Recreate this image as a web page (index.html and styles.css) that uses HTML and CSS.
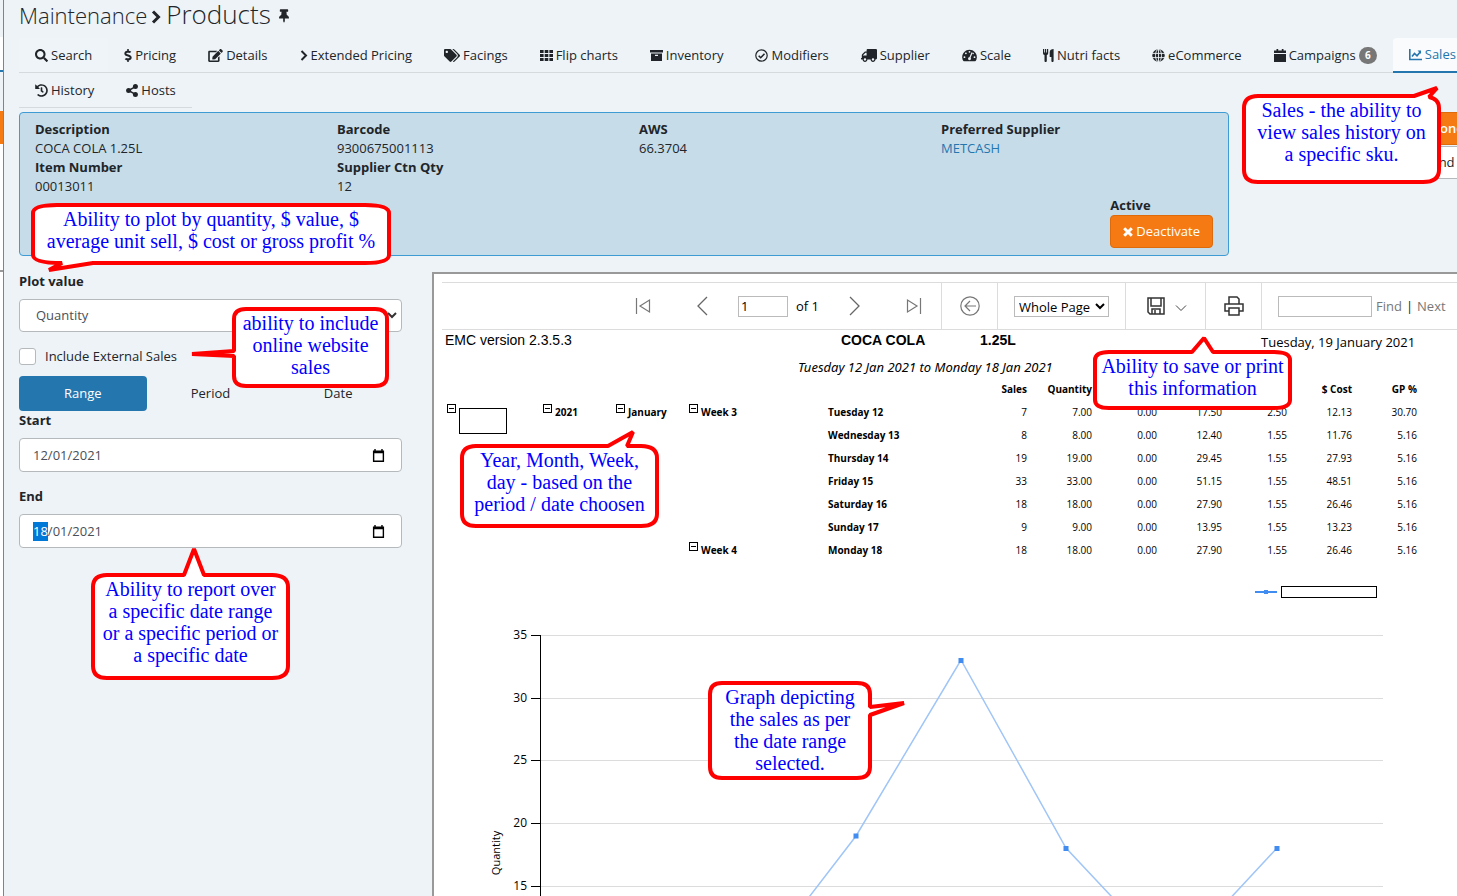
FILE: index.html
```html
<!DOCTYPE html>
<html lang="en">
<head>
<meta charset="utf-8">
<title>Maintenance - Products</title>
<link rel="stylesheet" href="styles.css">
</head>
<body>
<div class="app">
  <div class="rail" aria-hidden="true">
    <span class="rail-top"></span>
    <span class="rail-tab"></span>
    <span class="rail-space"></span>
    <span class="rail-action"></span>
    <span class="rail-body"></span>
    <span class="rail-frame"></span>
  </div>
  <main class="panel">
    <h1 class="title">Maintenance
      <svg class="title-chevron" viewBox="0 0 10 14"><path d="M2 1.500l5.500 5.500L2 12.500" fill="none" stroke="currentColor" stroke-width="3"/></svg>
      <span class="title-page">Products</span>
      <svg class="title-pin" viewBox="0 0 384 512"><path d="M298 214L286 96H328c13 0 24-11 24-24V24c0-13-11-24-24-24H56C43 0 32 11 32 24v48c0 13 11 24 24 24h42L86 214C37 237 0 277 0 328c0 13 11 24 24 24h136v104l1 4 24 48c3 6 11 6 14 0l24-48 1-4V352h136c13 0 24-11 24-24 0-51-38-91-86-114z"/></svg>
    </h1>

    <nav class="tabs">
      <ul class="tab-row">
        <li><a class="tab tab-first" href="#"><svg class="i13" viewBox="0 0 512 512"><path d="M505 442.700L405.300 343c-4.500-4.500-10.600-7-17-7H372c27.600-35.300 44-79.700 44-128C416 93.100 322.900 0 208 0S0 93.100 0 208s93.100 208 208 208c48.300 0 92.700-16.400 128-44v16.300c0 6.400 2.500 12.500 7 17l99.700 99.700c9.400 9.400 24.600 9.400 33.900 0l28.300-28.300c9.400-9.400 9.400-24.600.1-34zM208 336c-70.700 0-128-57.200-128-128 0-70.700 57.200-128 128-128 70.700 0 128 57.200 128 128 0 70.700-57.200 128-128 128z"/></svg>Search</a></li>
        <li><a class="tab" href="#"><svg class="i8" viewBox="0 0 288 512"><path d="M209.200 233.400l-108-31.600C88.700 198.200 80 186.500 80 173.500c0-16.300 13.200-29.500 29.500-29.500h66.300c12.200 0 24.200 3.700 34.200 10.500 6.100 4.100 14.300 3.100 19.500-2l34.800-34c7.100-6.900 6.100-18.400-1.800-24.500C238 74.800 207.400 64.100 176 64V16c0-8.800-7.200-16-16-16h-32c-8.800 0-16 7.200-16 16v48h-2.500C45.800 64-5.400 118.700.5 183.600c4.200 46.100 39.400 83.600 83.800 96.600l102.500 30c12.500 3.700 21.200 15.300 21.200 28.300 0 16.300-13.200 29.500-29.500 29.500h-66.300C100 368 88 364.300 78 357.500c-6.100-4.100-14.300-3.100-19.500 2l-34.800 34c-7.100 6.900-6.100 18.400 1.800 24.500 24.500 19.200 55.100 29.900 86.500 30v48c0 8.800 7.200 16 16 16h32c8.800 0 16-7.200 16-16v-48.200c46.600-.9 90.300-28.600 105.700-72.700 21.500-61.600-14.600-124.800-72.500-141.700z"/></svg>Pricing</a></li>
        <li><a class="tab" href="#"><svg class="i15" viewBox="0 0 576 512"><path d="M402.600 83.200l90.200 90.200c3.800 3.800 3.800 10 0 13.800L274.400 405.600l-92.800 10.300c-12.400 1.400-22.900-9.100-21.500-21.500l10.300-92.800L388.800 83.200c3.800-3.800 10-3.800 13.800 0zm162-22.900l-48.800-48.800c-15.200-15.200-39.900-15.200-55.200 0l-35.400 35.400c-3.800 3.800-3.800 10 0 13.800l90.200 90.200c3.800 3.800 10 3.800 13.800 0l35.400-35.400c15.200-15.300 15.200-40 0-55.200zM384 346.200V448H64V128h229.800c3.200 0 6.200-1.300 8.500-3.500l40-40c7.600-7.600 2.200-20.500-8.500-20.500H48C21.500 64 0 85.500 0 112v352c0 26.500 21.500 48 48 48h352c26.500 0 48-21.500 48-48V306.200c0-10.700-12.900-16-20.500-8.500l-40 40c-2.200 2.300-3.500 5.300-3.500 8.500z"/></svg>Details</a></li>
        <li><a class="tab" href="#"><svg class="i8" viewBox="0 0 8 13"><path d="M1.500 2l4.500 4.500L1.500 11" fill="none" stroke="currentColor" stroke-width="2"/></svg>Extended Pricing</a></li>
        <li><a class="tab" href="#"><svg class="i16" viewBox="0 0 640 512"><path d="M497.900 225.900L286 14A48 48 0 0 0 252 0H48C21.500 0 0 21.500 0 48v204a48 48 0 0 0 14 34l212 212c18.700 18.700 49 18.700 67.900 0l204-204c18.800-18.900 18.800-49.300 0-68.100zM112 160c-26.500 0-48-21.500-48-48s21.500-48 48-48 48 21.500 48 48-21.500 48-48 48zm514 133.800L421.800 498c-18.700 18.700-49 18.700-67.900 0l-.4-.4L527.600 323.500c17-17 26.400-39.600 26.400-63.600s-9.400-46.700-26.400-63.700L331.400 0H380a48 48 0 0 1 34 14l212 212c18.700 18.700 18.700 49 0 67.800z"/></svg>Facings</a></li>
        <li><a class="tab" href="#"><svg class="i13" viewBox="0 0 13 13"><path d="M0 1h3.600v3H0zM4.700 1h3.600v3H4.700zM9.400 1H13v3H9.400zM0 5h3.600v3H0zM4.700 5h3.600v3H4.700zM9.400 5H13v3H9.400zM0 9h3.600v3H0zM4.700 9h3.600v3H4.700zM9.400 9H13v3H9.400z"/></svg>Flip charts</a></li>
        <li><a class="tab" href="#"><svg class="i13" viewBox="0 0 13 13"><path fill-rule="evenodd" d="M0 1h13v2.600H0zM1 4.500h11V12H1zM5 5.800v1.200h3V5.800z"/></svg>Inventory</a></li>
        <li><a class="tab" href="#"><svg class="i13" viewBox="0 0 13 13"><g fill="none" stroke="currentColor"><circle cx="6.500" cy="6.500" r="5.700" stroke-width="1.200"/><path d="M3.700 6.700l2 2 3.800-3.900" stroke-width="1.600"/></g></svg>Modifiers</a></li>
        <li><a class="tab" href="#"><svg class="i16" viewBox="0 0 640 512"><path transform="matrix(-1 0 0 1 640 0)" d="M624 352h-16V243.900c0-12.700-5.100-24.900-14.100-33.900L494 110.100c-9-9-21.200-14.100-33.900-14.100H416V48c0-26.500-21.500-48-48-48H48C21.500 0 0 21.500 0 48v320c0 26.500 21.500 48 48 48h16c0 53 43 96 96 96s96-43 96-96h128c0 53 43 96 96 96s96-43 96-96h48c8.800 0 16-7.200 16-16v-32c0-8.800-7.200-16-16-16zM160 464c-26.500 0-48-21.500-48-48s21.500-48 48-48 48 21.500 48 48-21.500 48-48 48zm320 0c-26.500 0-48-21.500-48-48s21.500-48 48-48 48 21.500 48 48-21.500 48-48 48zm80-208H416V144h44.100l99.900 99.900V256z"/></svg>Supplier</a></li>
        <li><a class="tab" href="#"><svg class="i15" viewBox="0 0 576 512"><path d="M288 32C129 32 0 161 0 320c0 53 14 102 39 145 6 9 16 15 28 15h442c12 0 22-6 28-15 25-43 39-92 39-145C576 161 447 32 288 32z"/><g fill="#edf3f7"><circle cx="288" cy="112" r="36"/><circle cx="145" cy="170" r="36"/><circle cx="90" cy="320" r="36"/><circle cx="486" cy="320" r="36"/><circle cx="430" cy="180" r="30"/></g><path d="M390 140L290 370" stroke="#edf3f7" stroke-width="46"/><circle cx="288" cy="385" r="58" fill="#edf3f7"/></svg>Scale</a></li>
        <li><a class="tab" href="#"><svg class="i11" viewBox="0 0 11 13"><path d="M0 0h1.200v3.500h.8V0h1.200v3.500H4V0h1.200v4c0 1.200-.6 1.800-1.400 2.100V12c0 1.300-2.300 1.300-2.300 0V6.100C.6 5.800 0 5.200 0 4zM10.600 0v12c0 1.300-2.200 1.300-2.200 0V8H6.700V3.200C6.700 1.200 8.500 0 10.600 0z"/></svg>Nutri facts</a></li>
        <li><a class="tab" href="#"><svg class="i13" viewBox="0 0 13 13"><circle cx="6.500" cy="6.500" r="6.200"/><g fill="none" stroke="#edf3f7" stroke-width=".9"><ellipse cx="6.500" cy="6.500" rx="3" ry="6.200"/><path d="M0 4.400h13M0 8.600h13M6.500 0v13"/></g></svg>eCommerce</a></li>
        <li><a class="tab" href="#"><svg class="i12" viewBox="0 0 12 13"><path d="M2.500 0h1.700v1.500h3.600V0h1.700v1.500H12V4H0V1.500h2.500zM0 5h12v8H0z"/></svg>Campaigns<span class="badge">6</span></a></li>
        <li><a class="tab tab-active" href="#"><svg class="i13" viewBox="0 0 13 13"><path d="M.8 1v10.500H13M3 8.500l2.500-3 2.500 2.300 3-3.600" fill="none" stroke="currentColor" stroke-width="1.600"/><path d="M8.500 2.500H12V6z"/></svg>Sales</a></li>
      </ul>
      <ul class="tab-row tab-row-short">
        <li><a class="tab" href="#"><svg class="i13" viewBox="0 0 512 512"><path d="M504 255.500c.3 136.600-111.200 248.400-247.800 248.500-59 0-113.200-20.500-155.800-54.900-11.100-9-11.900-25.600-1.900-35.600l11.300-11.300c8.600-8.600 22.400-9.600 31.900-2C173 425 212.800 440 256 440c101.700 0 184-82.300 184-184 0-101.700-82.300-184-184-184-48.800 0-93.100 19-126 50l50.700 50.700c10 10 2.900 27.300-11.400 27.300H24c-8.800 0-16-7.200-16-16V38.600c0-14.200 17.200-21.400 27.300-11.300l49.400 49.400C129.200 34 189.600 8 256 8c136.800 0 247.700 110.800 248 247.500zM323 334.300l9.900-12.600c8-10.500 6.200-25.600-4.200-33.700L288 256.300V152c0-13.300-10.700-24-24-24h-16c-13.300 0-24 10.700-24 24v135.700l65.400 50.800c10.500 8.200 25.600 6.300 33.600-4.200z"/></svg>History</a></li>
        <li><a class="tab" href="#"><svg class="i12" viewBox="0 0 12 13"><circle cx="2.600" cy="6.500" r="2.500"/><circle cx="9.400" cy="2.600" r="2.500"/><circle cx="9.400" cy="10.400" r="2.500"/><path d="M9.400 2.600L2.600 6.500l6.800 3.900" fill="none" stroke="currentColor" stroke-width="1.500"/></svg>Hosts</a></li>
      </ul>
    </nav>

    <div class="summary-row">
      <section class="summary">
        <dl class="facts">
          <div><dt>Description</dt><dd>COCA COLA 1.25L</dd><dt>Item Number</dt><dd>00013011</dd></div>
          <div><dt>Barcode</dt><dd>9300675001113</dd><dt>Supplier Ctn Qty</dt><dd>12</dd></div>
          <div><dt>AWS</dt><dd>66.3704</dd></div>
          <div><dt>Preferred Supplier</dt><dd><a class="link" href="#">METCASH</a></dd></div>
        </dl>
        <div class="status">
          <div class="status-box">
            <strong>Active</strong>
            <button class="btn-orange" type="button"><svg class="i10" viewBox="0 0 10 10"><path d="M1.200 1.200l7.600 7.600M8.800 1.200l-7.600 7.600" stroke="currentColor" stroke-width="3"/></svg>Deactivate</button>
          </div>
        </div>
      </section>
      <div class="actions">
        <button class="action action-main" type="button">Clone</button>
        <button class="action" type="button">Expand</button>
      </div>
    </div>

    <div class="work">
      <form class="filters">
        <label class="label" for="plot">Plot value</label>
        <div class="select-wrap">
          <select class="field select" id="plot"><option>Quantity</option></select>
          <svg class="select-arrow" viewBox="0 0 10 7"><path d="M1 1l4 4 4-4" fill="none" stroke="#333" stroke-width="2"/></svg>
        </div>
        <label class="check"><input class="check-box" type="checkbox">Include External Sales</label>
        <div class="modes">
          <button class="mode mode-on" type="button">Range</button>
          <button class="mode" type="button">Period</button>
          <button class="mode" type="button">Date</button>
        </div>
        <label class="label" for="start">Start</label>
        <div class="date">
          <input class="date-input" id="start" type="text" value="12/01/2021">
          <button class="date-btn" type="button" aria-label="Pick start date"><svg class="i13" viewBox="0 0 13 14"><path fill-rule="evenodd" d="M.5 1.500h1.500V0h1.500v1.500h6V0H11v1.500h1.500V14H.500zM2 4.500v8h9v-8z" fill="#000"/></svg></button>
        </div>
        <label class="label" for="end">End</label>
        <div class="date">
          <input class="date-input" id="end" type="text" value="18/01/2021">
          <button class="date-btn" type="button" aria-label="Pick end date"><svg class="i13" viewBox="0 0 13 14"><path fill-rule="evenodd" d="M.5 1.500h1.500V0h1.500v1.500h6V0H11v1.500h1.500V14H.500zM2 4.500v8h9v-8z" fill="#000"/></svg></button>
        </div>
      </form>

      <section class="report">
        <div class="toolbar">
          <div class="tool-group tool-pages">
            <button class="tool" type="button" aria-label="First page"><svg class="i16t" viewBox="0 0 16 16"><path d="M1.500 0v16M14.500 2v12L5 8z" fill="none" stroke="#777" stroke-width="1.200"/></svg></button>
            <button class="tool" type="button" aria-label="Previous page"><svg class="i12t" viewBox="0 0 12 20"><path d="M11 1L2 10l9 9" fill="none" stroke="#666" stroke-width="1.300"/></svg></button>
            <div class="page-of"><input class="box page-input" type="text" value="1" aria-label="Page"><span>of 1</span></div>
            <button class="tool" type="button" aria-label="Next page"><svg class="i12t" viewBox="0 0 12 20"><path d="M1 1l9 9-9 9" fill="none" stroke="#666" stroke-width="1.300"/></svg></button>
            <button class="tool" type="button" aria-label="Last page"><svg class="i16t" viewBox="0 0 16 16"><path d="M14.500 0v16M1.500 2v12L11 8z" fill="none" stroke="#777" stroke-width="1.200"/></svg></button>
          </div>
          <div class="tool-group tool-icon"><button class="tool" type="button" aria-label="Back"><svg class="i20" viewBox="0 0 20 20"><g fill="none" stroke="#777" stroke-width="1.200"><circle cx="10" cy="10" r="9.200"/><path d="M16 10H5M10 5l-5 5 5 5"/></g></svg></button></div>
          <div class="tool-group"><select class="box zoom" aria-label="Zoom"><option>Whole Page</option></select></div>
          <div class="tool-group tool-save">
            <button class="tool" type="button" aria-label="Save"><svg class="i18" viewBox="0 0 18 18"><g fill="none" stroke="#333" stroke-width="1.500"><path d="M1 1h16v16H3l-2-2zM4 1v8h10V1M5 17v-5h8v5M8 13v4"/></g></svg></button>
            <button class="tool tool-drop" type="button" aria-label="Save options"><svg class="i12" viewBox="0 0 12 8"><path d="M1 1l5 5 5-5" fill="none" stroke="#444"/></svg></button>
          </div>
          <div class="tool-group tool-icon"><button class="tool" type="button" aria-label="Print"><svg class="i20" viewBox="0 0 20 20"><g fill="#fff" stroke="#333" stroke-width="1.500"><path d="M5 8V1h8l2 2v5M5 15H1V8h18v7h-4"/><path d="M5 12h10v7H5z"/></g></svg></button></div>
          <div class="tool-group tool-find"><input class="box find" type="text" aria-label="Find text"><a href="#">Find</a><span class="bar">|</span><a href="#">Next</a></div>
        </div>

        <header class="report-head">
          <span>EMC version 2.3.5.3</span><b>COCA COLA</b><b>1.25L</b><span class="report-date">Tuesday, 19 January 2021</span>
        </header>
        <p class="report-range">Tuesday 12 Jan 2021 to Monday 18 Jan 2021</p>

        <table class="sales">
          <colgroup><col class="c-store"><col class="c-year"><col class="c-year"><col class="c-week"><col class="c-day"><col class="c-num"><col class="c-num"><col class="c-num"><col class="c-num"><col class="c-num"><col class="c-num"></colgroup>
          <thead><tr><th colspan="4"></th><th class="num">Sales</th><th class="num">Quantity</th><th></th><th></th><th></th><th class="num">$ Cost</th><th class="num">GP %</th></tr></thead>
          <tbody>
            <tr>
              <th class="group" rowspan="7"><div class="node"><button class="toggle" type="button" aria-label="Collapse store"></button><span class="blank"></span></div></th>
              <th class="group" rowspan="7"><div class="node"><button class="toggle" type="button" aria-label="Collapse year"></button>2021</div></th>
              <th class="group" rowspan="7"><div class="node"><button class="toggle" type="button" aria-label="Collapse month"></button>January</div></th>
              <th class="group" rowspan="6"><div class="node"><button class="toggle" type="button" aria-label="Collapse week 3"></button>Week 3</div></th>
              <td class="day"><span>Tuesday 12</span><span>7</span></td><td>7.00</td><td>0.00</td><td>17.50</td><td>2.50</td><td>12.13</td><td>30.70</td>
            </tr>
            <tr><td class="day"><span>Wednesday 13</span><span>8</span></td><td>8.00</td><td>0.00</td><td>12.40</td><td>1.55</td><td>11.76</td><td>5.16</td></tr>
            <tr><td class="day"><span>Thursday 14</span><span>19</span></td><td>19.00</td><td>0.00</td><td>29.45</td><td>1.55</td><td>27.93</td><td>5.16</td></tr>
            <tr><td class="day"><span>Friday 15</span><span>33</span></td><td>33.00</td><td>0.00</td><td>51.15</td><td>1.55</td><td>48.51</td><td>5.16</td></tr>
            <tr><td class="day"><span>Saturday 16</span><span>18</span></td><td>18.00</td><td>0.00</td><td>27.90</td><td>1.55</td><td>26.46</td><td>5.16</td></tr>
            <tr><td class="day"><span>Sunday 17</span><span>9</span></td><td>9.00</td><td>0.00</td><td>13.95</td><td>1.55</td><td>13.23</td><td>5.16</td></tr>
            <tr>
              <th class="group"><div class="node"><button class="toggle" type="button" aria-label="Collapse week 4"></button>Week 4</div></th>
              <td class="day"><span>Monday 18</span><span>18</span></td><td>18.00</td><td>0.00</td><td>27.90</td><td>1.55</td><td>26.46</td><td>5.16</td>
            </tr>
          </tbody>
        </table>

        <div class="legend"><svg class="legend-mark" viewBox="0 0 22 6"><path d="M0 3h22" stroke="#418cf0" stroke-width="2"/><path d="M9 1h4v4H9z" fill="#418cf0"/></svg><span class="legend-name"></span></div>

        <svg class="chart" viewBox="0 0 1015 500" width="1015" height="500" role="img" aria-label="Quantity by day">
          <path d="M99 35.500h842M99 98.500h842M99 160.500h842M99 223.500h842M99 286.500h842" stroke="#dcdcdc"/>
          <path d="M98.500 35v440M89 35.500h10M89 98.500h10M89 160.500h10M89 223.500h10M89 286.500h10" stroke="#000"/>
          <g class="chart-text" text-anchor="end"><text x="85" y="39">35</text><text x="85" y="102">30</text><text x="85" y="164">25</text><text x="85" y="227">20</text><text x="85" y="290">15</text></g>
          <text class="chart-title" text-anchor="middle" transform="translate(58 253) rotate(-90)">Quantity</text>
          <path d="M203 386L308 374 414 236 519 60 624 248 730 361 835 248" fill="none" stroke="#a0c5f7" stroke-width="1.500"/>
          <path d="M411.500 233.500h5v5h-5zM516.500 58h5v5h-5zM621.500 246h5v5h-5zM832.500 246h5v5h-5z" fill="#418cf0"/>
        </svg>
      </section>
    </div>
  </main>

  <aside class="callout note-sales"><svg class="bubble"><path d="M16 2H172L195 -6 187 3Q197 5 197 14V76Q197 88 181 88H16Q2 88 2 76V14Q2 2 16 2z"/></svg><p>Sales - the ability to<br>view sales history on<br>a specific sku.</p></aside>
  <aside class="callout note-plot"><svg class="bubble"><path d="M26 2H334Q358 2 358 10V52Q358 60 334 60H62L18 67 31 60Q2 60 2 52V10Q2 2 26 2z"/></svg><p>Ability to plot by quantity, $ value, $<br>average unit sell, $ cost or gross profit %</p></aside>
  <aside class="callout note-online"><svg class="bubble"><path d="M14 2H143Q155 2 155 12V69Q155 79 143 79H14Q2 79 2 69V49L-40 47 2 44V12Q2 2 14 2z"/></svg><p>ability to include<br>online website<br>sales</p></aside>
  <aside class="callout note-week"><svg class="bubble"><path d="M16 2H148L173 -12 167 2H181Q197 2 197 14V70Q197 82 181 82H16Q2 82 2 70V14Q2 2 16 2z"/></svg><p>Year, Month, Week,<br>day - based on the<br>period / date choosen</p></aside>
  <aside class="callout note-dates"><svg class="bubble"><path d="M16 2H93L103 -24 113 2H181Q197 2 197 14V93Q197 105 181 105H16Q2 105 2 93V14Q2 2 16 2z"/></svg><p>Ability to report over<br>a specific date range<br>or a specific period or<br>a specific date</p></aside>
  <aside class="callout note-graph"><svg class="bubble"><path d="M14 2H149Q162 2 162 13V26L196 22 162 34V86Q162 97 149 97H14Q2 97 2 86V13Q2 2 14 2z"/></svg><p>Graph depicting<br>the sales as per<br>the date range<br>selected.</p></aside>
  <aside class="callout note-print"><svg class="bubble"><path d="M16 2H99L111 -12 120 2H181Q197 2 197 10V50Q197 58 181 58H16Q2 58 2 50V10Q2 2 16 2z"/></svg><p>Ability to save or print<br>this information</p></aside>
</div>
<script>
  const end = document.getElementById('end');
  end.focus();
  end.setSelectionRange(0, 2);
</script>
</body>
</html>
```
FILE: styles.css
```css
* { box-sizing: border-box; }

body {
  margin: 0;
  overflow: hidden;
  background: #edf3f7;
  color: #212529;
  font: 13px/19px "Open Sans", "Noto Sans", sans-serif;
}

button, input, select { font: inherit; color: inherit; margin: 0; }
button { border: 0; background: none; padding: 0; cursor: pointer; }
ul, dl, dd, p, h1 { margin: 0; padding: 0; }
ul { list-style: none; }
a { color: inherit; text-decoration: none; }
svg { display: block; flex: none; fill: currentColor; }

.app { position: relative; display: flex; height: 100vh; overflow: hidden; }

/* edge of the page that lies behind the panel */
.rail { display: flex; flex-direction: column; flex: none; width: 4px; border-right: 1px solid #4795c8; background: #fff; }
.rail-top { height: 37px; background: #edf3f7; }
.rail-tab { height: 35px; border-bottom: 2px solid #2476ae; }
.rail-space { height: 39px; background: #edf3f7; }
.rail-action { height: 33px; background: #f67a13; }
.rail-body { height: 126px; background: #fff; }
.rail-frame { flex: 1; border-top: 2px solid #999; }

.panel { flex: 1; min-width: 0; display: flex; flex-direction: column; padding-left: 15px; }

.title { display: flex; align-items: baseline; height: 38px; font-size: 22px; font-weight: 300; line-height: 30px; white-space: nowrap; }
.title-chevron { width: 10px; height: 14px; margin: 0 5px 0 4px; }
.title-page { font-size: 26px; line-height: 28px; }
.title-pin { width: 10px; height: 14px; margin-left: 8px; align-self: flex-start; margin-top: 9px; }

.tab-row { display: flex; width: max-content; border-bottom: 1px solid #d5dadd; }
.tab { display: flex; align-items: center; gap: 3px; height: 34px; padding: 0 16px; white-space: nowrap; }
.tab-first { background: #eff4f8; }
.tab-active { background: #fafbfc; color: #2476ae; border-bottom: 2px solid #2476ae; border-radius: 4px 4px 0 0; height: 35px; margin-bottom: -1px; }
.badge { min-width: 18px; padding: 0 4px; border-radius: 9px; background: #777; color: #fff; font-size: 10px; font-weight: 700; line-height: 17px; text-align: center; }

.i8 { width: 8px; height: 13px; }
.i10 { width: 10px; height: 10px; }
.i11 { width: 11px; height: 13px; }
.i12 { width: 12px; height: 13px; }
.i12t { width: 12px; height: 20px; }
.i13 { width: 13px; height: 13px; }
.i15 { width: 15px; height: 13px; }
.i16 { width: 16px; height: 13px; }
.i16t { width: 16px; height: 16px; }
.i18 { width: 18px; height: 18px; }
.i20 { width: 20px; height: 20px; }

.summary-row { display: flex; gap: 16px; margin-top: 4px; }
.summary { flex: 1; padding: 7px 0; border: 1px solid #3f9bd3; border-radius: 4px; background: #c6dce8; }
.facts { display: grid; grid-template-columns: repeat(4, 1fr); min-height: 76px; }
.facts > div { padding-left: 15px; }
dt { font-weight: 700; }
.link { color: #2476ae; }
.status { display: flex; justify-content: flex-end; padding-right: 15px; }
.status-box { display: flex; flex-direction: column; }
.btn-orange { display: flex; align-items: center; gap: 3px; height: 33px; padding: 0 12px; border: 1px solid #dd6a0b; border-radius: 4px; background: #f67a13; color: #fff; }
.actions { width: 212px; overflow: hidden; display: flex; flex-direction: column; gap: 1px; }
.action { width: 270px; flex: none; height: 33px; padding-left: 104px; border: 1px solid #b5b9bc; background: #fff; }
.action-main { border-color: #dd6a0b; background: #f67a13; color: #fff; font-weight: 600; padding-left: 132px; }

.work { display: flex; flex: 1; min-height: 0; gap: 30px; margin-top: 16px; }
.filters { flex: none; width: 383px; }
.label { display: block; font-weight: 700; }
.field, .date { width: 100%; border: 1px solid #b5b9bc; border-radius: 4px; background: #fff; color: #495057; }
.select-wrap { position: relative; margin-top: 8px; }
.select { height: 33px; padding: 0 16px; appearance: none; display: block; }
.select-arrow { position: absolute; right: 5px; top: 13px; width: 10px; height: 7px; }
.check { display: flex; align-items: center; gap: 9px; margin-top: 15px; height: 19px; }
.check-box { appearance: none; width: 17px; height: 17px; border: 1px solid #b5b9bc; border-radius: 3px; background: #fff; }
.modes { display: grid; grid-template-columns: repeat(3, 1fr); margin-top: 10px; }
.mode { height: 35px; border-radius: 4px; }
.mode-on { background: #2476ae; color: #fff; }
.date { display: flex; align-items: center; height: 34px; margin: 8px 0 15px; padding: 0 16px 0 13px; }
.date-input { flex: 1; min-width: 0; border: 0; outline: 0; padding: 0; background: none; }
.date-input::selection { background: #0078d7; color: #fff; }

.report { flex: 1; min-width: 0; padding: 8px 0 0 8px; overflow: hidden; border: solid #999; border-width: 2px 0 0 2px; background: #fff; color: #000; }
.toolbar { display: flex; height: 48px; border: solid #dcdcdc; border-width: 1px 0; }
.tool-group { display: flex; align-items: center; flex: none; padding: 0 16px; border-left: 1px solid #dcdcdc; }
.tool-icon { padding: 0 17px 0 18px; }
.tool-pages { flex: 1; justify-content: flex-end; gap: 45px; padding-right: 19px; border-left: 0; }
.page-of { display: flex; align-items: center; gap: 8px; margin: 0 -15px; }
.box { height: 21px; padding: 0 2px; border: 1px solid #bbb; background: #fff; }
.page-input { width: 50px; }
.zoom { width: 95px; padding: 0; }
.tool-save { gap: 10px; padding: 0 18px 0 21px; }
.tool-drop { padding-top: 5px; }
.tool-find { width: 196px; gap: 4px; white-space: nowrap; color: #777; }
.bar { color: #222; }
.find { width: 94px; }

.report-head { display: grid; grid-template-columns: 396px 139px 281px 1fr; padding-left: 3px; font: 14px/20px "Liberation Sans", Arial, sans-serif; white-space: nowrap; }
.report-date { font: 13px/24px "Open Sans", "Noto Sans", sans-serif; }
.report-range { padding: 3px 0 0 356px; font-family: "Noto Sans", sans-serif; font-style: italic; line-height: 20px; }

.sales { width: 972px; margin-left: 3px; table-layout: fixed; border-collapse: collapse; font-size: 10px; line-height: 15px; }
.sales th, .sales td { height: 23px; padding: 5px 0 3px; text-align: right; white-space: nowrap; }
.sales .group { vertical-align: top; padding: 3px 0 0 2px; text-align: left; }
.c-store { width: 96px; }
.c-year { width: 73px; }
.c-week { width: 141px; }
.c-day { width: 199px; }
.c-num { width: 65px; }
.sales .day span { display: inline-block; }
.sales .day span:first-child { float: left; font-weight: 700; }
.node { display: flex; align-items: flex-start; gap: 3px; line-height: 18px; }
.toggle { flex: none; width: 9px; height: 9px; margin-top: 1px; border: 1px solid #000; background: linear-gradient(#000, #000) center / 5px 1px no-repeat; }
.blank { width: 48px; height: 26px; margin-top: 5px; border: 1px solid #000; }

.legend { display: flex; align-items: center; gap: 4px; margin: 25px 0 0 813px; height: 12px; }
.legend-mark { width: 22px; height: 6px; }
.legend-name { width: 96px; height: 12px; border: 1px solid #000; }
.chart { margin-top: 2px; }
.chart-text { font: 12px "Open Sans", sans-serif; }
.chart-title { font: 11px "Open Sans", sans-serif; }

/* annotation bubbles lie over the screen */
.callout { position: absolute; padding-top: 5px; color: #00f; font: 20px/22px "Liberation Serif", serif; text-align: center; white-space: nowrap; }
.callout p { position: relative; }
.bubble { position: absolute; left: 0; top: 0; width: 100%; height: 100%; overflow: visible; fill: #fff; stroke: #f00; stroke-width: 4px; stroke-linejoin: bevel; }
.note-sales { left: 1242px; top: 94px; width: 199px; height: 90px; }
.note-plot { left: 31px; top: 203px; width: 360px; height: 62px; }
.note-online { left: 232px; top: 307px; width: 157px; height: 81px; }
.note-week { left: 460px; top: 444px; width: 199px; height: 84px; }
.note-dates { left: 91px; top: 573px; width: 199px; height: 107px; }
.note-graph { left: 708px; top: 681px; width: 164px; height: 99px; }
.note-print { left: 1093px; top: 350px; width: 199px; height: 60px; }
```
